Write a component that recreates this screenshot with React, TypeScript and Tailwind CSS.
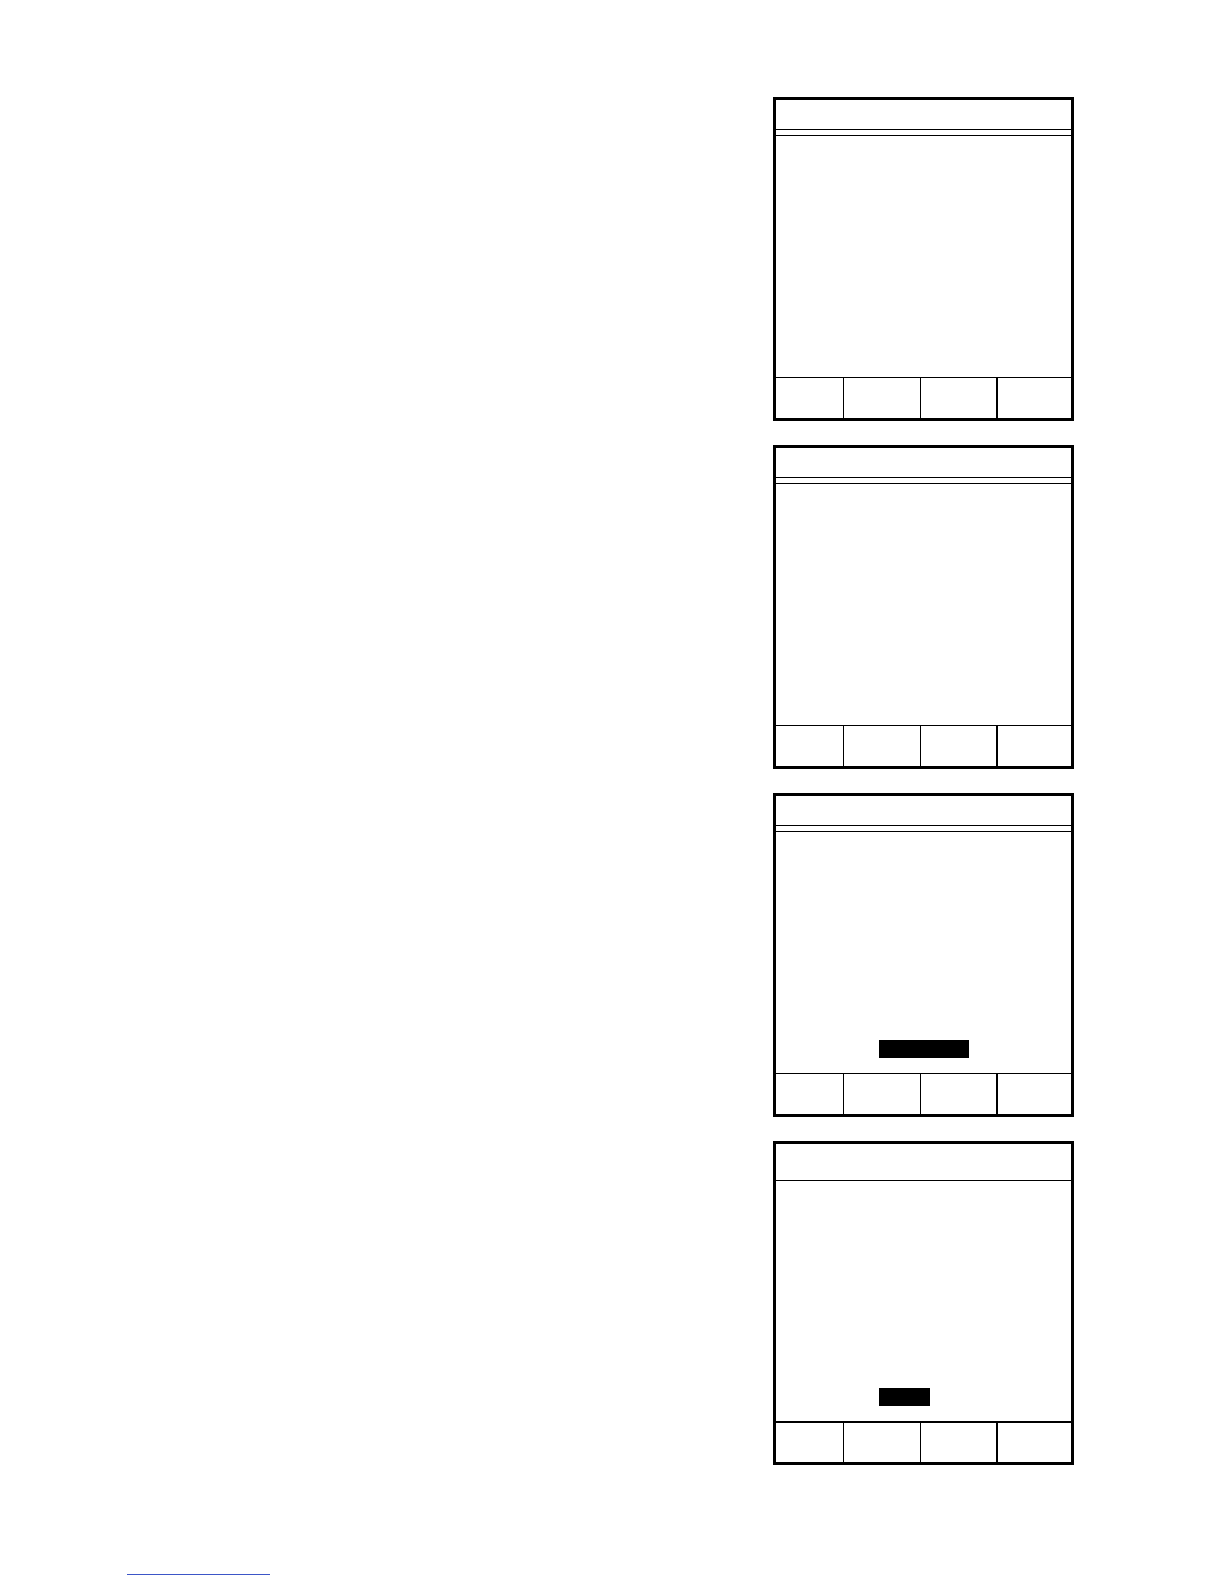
import React from "react";

function BottomRow({ thick }: { thick?: boolean }) {
  return (
    <div className={`flex h-[41px] shrink-0 ${thick ? "border-t-2" : "border-t"} border-black`}>
      <div className="w-[68px] border-r border-black" />
      <div className="w-[77px] border-r border-black" />
      <div className="w-[77px] border-r-2 border-black" />
      <div className="flex-1" />
    </div>
  );
}

function Panel({ variant, box }: { variant: "double" | "single"; box?: number }) {
  return (
    <div className="flex h-[324px] w-[301px] flex-col border-[3px] border-black bg-white">
      {variant === "double" ? (
        <>
          <div className="h-[30px] shrink-0 border-b border-black" />
          <div className="h-[6px] shrink-0 border-b border-black" />
        </>
      ) : (
        <div className="h-[37px] shrink-0 border-b border-black" />
      )}
      <div className="flex flex-1 flex-col justify-end pb-[15px] pl-[103px]">
        {box ? <div className="h-[18px] bg-black" style={{ width: box }} /> : null}
      </div>
      <BottomRow thick={variant === "single"} />
    </div>
  );
}

export default function App() {
  return (
    <div className="min-h-[1584px] w-[1224px] bg-white pt-[97px]" style={{ fontFamily: '"Liberation Sans", Arial, sans-serif' }}>
      <div className="ml-[773px] flex flex-col gap-[24px]">
        <Panel variant="double" />
        <Panel variant="double" />
        <Panel variant="double" box={90} />
        <Panel variant="single" box={51} />
      </div>
      <div className="ml-[127px] mt-[109px] h-px w-[143px] bg-[#3d56c8]" />
    </div>
  );
}
